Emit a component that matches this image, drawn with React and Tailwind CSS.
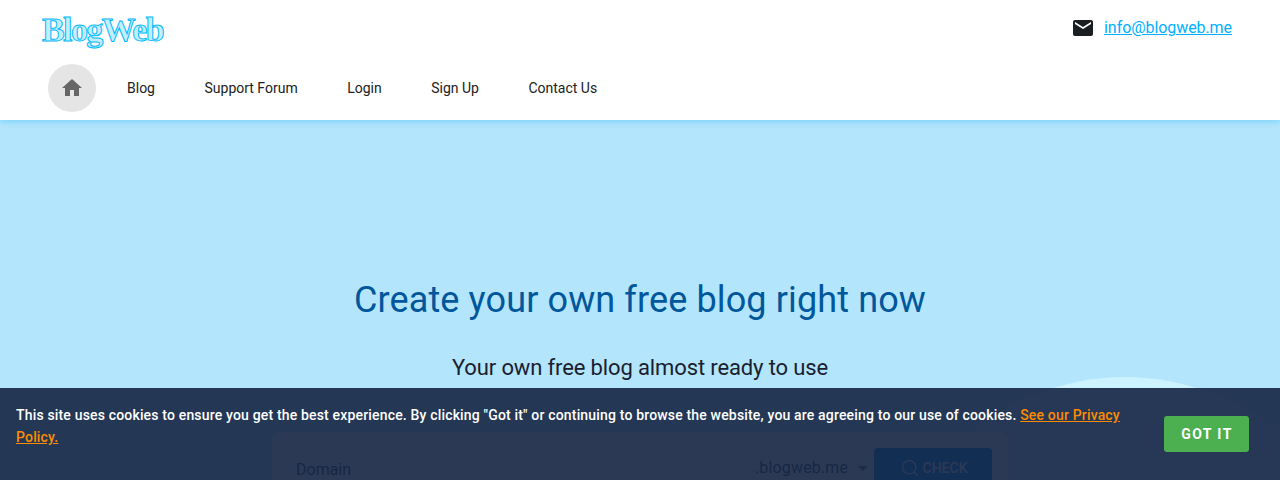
import { Search } from "lucide-react";

const links = ["Blog", "Support Forum", "Login", "Sign Up", "Contact Us"];

function Header() {
  return (
    <header className="relative z-10 h-[120px] bg-white shadow-[0_2px_6px_rgba(3,169,244,0.3)]">
      <div className="flex items-start justify-between pl-[42px] pr-12">
        <a className="mt-2 font-['Liberation_Serif',serif] text-[34px] font-bold leading-[44px] tracking-[-1.6px] text-[#c4efff] [-webkit-text-stroke:1px_#00b8ff]">
          BlogWeb
        </a>
        <div className="mt-4 flex h-6 items-center gap-[9px]">
          <svg width="24" height="24" viewBox="0 0 24 24" fill="#1a1d21">
            <path d="M20 4H4c-1.1 0-1.99.9-1.99 2L2 18c0 1.1.9 2 2 2h16c1.1 0 2-.9 2-2V6c0-1.1-.9-2-2-2zm0 4l-8 5-8-5V6l8 5 8-5v2z" />
          </svg>
          <a className="text-base tracking-[-0.07px] text-[#00b0ff] underline">info@blogweb.me</a>
        </div>
      </div>
      <nav className="absolute left-12 top-16 flex items-center">
        <div className="mr-[31px] flex h-12 w-12 items-center justify-center rounded-full bg-[#e5e5e5]">
          <svg width="24" height="24" viewBox="0 0 24 24" fill="#666666">
            <path d="M10 20v-6h4v6h5v-8h3L12 3 2 12h3v8z" />
          </svg>
        </div>
        <div className="flex gap-[49.5px] text-sm text-[#212121]">
          {links.map((l) => (
            <a key={l}>{l}</a>
          ))}
        </div>
      </nav>
    </header>
  );
}

function Hero() {
  return (
    <main className="relative h-[360px] overflow-hidden bg-[#b3e5fc] pt-[159px] text-center">
      <div className="absolute left-[884px] top-[257px] h-[482px] w-[482px] rounded-full bg-[#ccf3ff]" />
      <div className="relative">
        <h1 className="text-[36px] leading-[42px] tracking-[0.12px] text-[#01579b]">Create your own free blog right now</h1>
        <p className="mt-[32px] text-[22px] leading-[30px] tracking-[-0.13px] text-[#1a2030]">Your own free blog almost ready to use</p>
        <div className="mx-auto mt-[49px] flex h-[100px] w-[736px] items-start rounded-lg bg-white p-4 text-left">
          <div className="flex h-10 flex-1 items-center pl-2 pt-1 text-base text-[#424242]">Domain</div>
          <div className="flex h-10 w-[142px] items-center gap-[10px] border-l border-[#eeeeee] pl-[22px] text-base tracking-[0.15px] text-[#424242]">
            .blogweb.me
            <span className="h-0 w-0 border-x-[5px] border-t-[5px] border-x-transparent border-t-[#757575]" />
          </div>
          <button className="flex h-10 w-[118px] items-center justify-center gap-[3px] rounded bg-[#0091ea] pl-px text-sm font-medium text-white">
            <Search size={20} strokeWidth={1.5} />
            CHECK
          </button>
        </div>
      </div>
    </main>
  );
}

function CookieBar() {
  return (
    <div className="absolute inset-x-0 bottom-0 z-20 flex h-[92px] items-start bg-[#142342]/90 pl-4 pr-[31px] pt-4">
      <p className="w-[1120px] text-sm font-medium leading-[22px] tracking-[0.17px] text-white">
        This site uses cookies to ensure you get the best experience. By clicking "Got it" or continuing to browse the website, you are agreeing to our use of cookies.{" "}
        <a className="text-[#fb8c00] underline">See our Privacy Policy.</a>
      </p>
      <button className="ml-auto mt-3 h-9 w-[85px] rounded-[3px] bg-[#4caf50] pl-px text-sm font-bold tracking-[1.4px] text-white">
        GOT IT
      </button>
    </div>
  );
}

export default function App() {
  return (
    <div className="relative h-[480px] overflow-hidden font-['Roboto',sans-serif]">
      <Header />
      <Hero />
      <CookieBar />
    </div>
  );
}
